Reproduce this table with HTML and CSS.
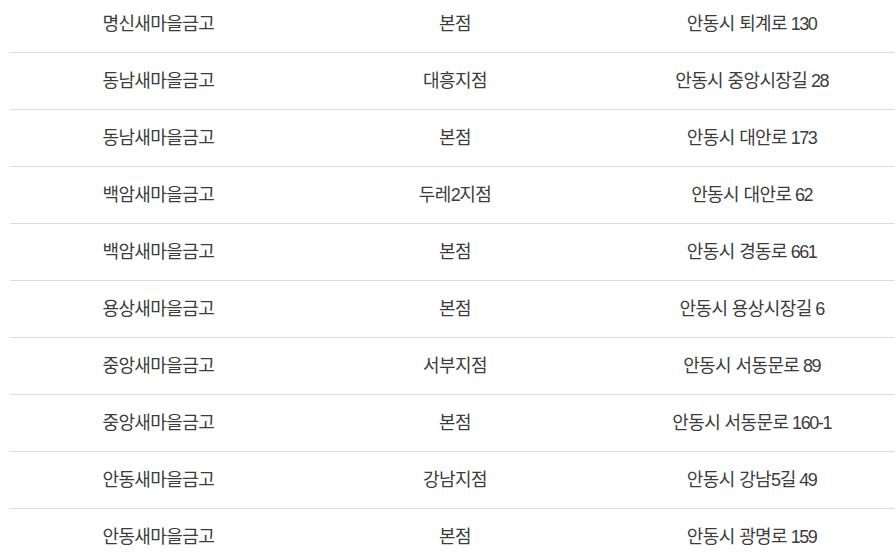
FILE: index.html
```html
<!DOCTYPE html>
<html lang="ko">
<head>
<meta charset="utf-8">
<link rel="stylesheet" href="styles.css">
</head>
<body>
<div class="wrap">
<table class="list">
<tbody>
<tr><td>명신새마을금고</td><td>본점</td><td>안동시 퇴계로<span class="num"> 130</span></td></tr>
<tr><td>동남새마을금고</td><td>대흥지점</td><td>안동시 중앙시장길<span class="num"> 28</span></td></tr>
<tr><td>동남새마을금고</td><td>본점</td><td>안동시 대안로<span class="num"> 173</span></td></tr>
<tr><td>백암새마을금고</td><td>두레<span class="num">2</span>지점</td><td>안동시 대안로<span class="num"> 62</span></td></tr>
<tr><td>백암새마을금고</td><td>본점</td><td>안동시 경동로<span class="num"> 661</span></td></tr>
<tr><td>용상새마을금고</td><td>본점</td><td>안동시 용상시장길<span class="num"> 6</span></td></tr>
<tr><td>중앙새마을금고</td><td>서부지점</td><td>안동시 서동문로<span class="num"> 89</span></td></tr>
<tr><td>중앙새마을금고</td><td>본점</td><td>안동시 서동문로<span class="num"> 160-1</span></td></tr>
<tr><td>안동새마을금고</td><td>강남지점</td><td>안동시 강남<span class="num">5</span>길<span class="num"> 49</span></td></tr>
<tr><td>안동새마을금고</td><td>본점</td><td>안동시 광명로<span class="num"> 159</span></td></tr>
</tbody>
</table>
</div>
</body>
</html>
```

FILE: styles.css
```css
html, body {
  margin: 0;
  padding: 0;
  background: #fff;
  overflow: hidden;
}
.wrap {
  margin-top: -4px;
  padding-left: 10px;
  width: 890px;
}
.list {
  width: 890px;
  border-collapse: collapse;
  table-layout: fixed;
  font-family: "Noto Sans CJK KR", "Noto Sans", sans-serif;
  font-size: 18px;
  letter-spacing: -0.6px;
  color: #3c3c3c;
}
.list td {
  height: 52px;
  padding: 0 0 4px;
  text-align: center;
  vertical-align: middle;
  border-bottom: 1px solid #dcdcdc;
}
.num {
  font-family: "Liberation Sans", Arial, sans-serif;
  letter-spacing: -1.4px;
}
```
